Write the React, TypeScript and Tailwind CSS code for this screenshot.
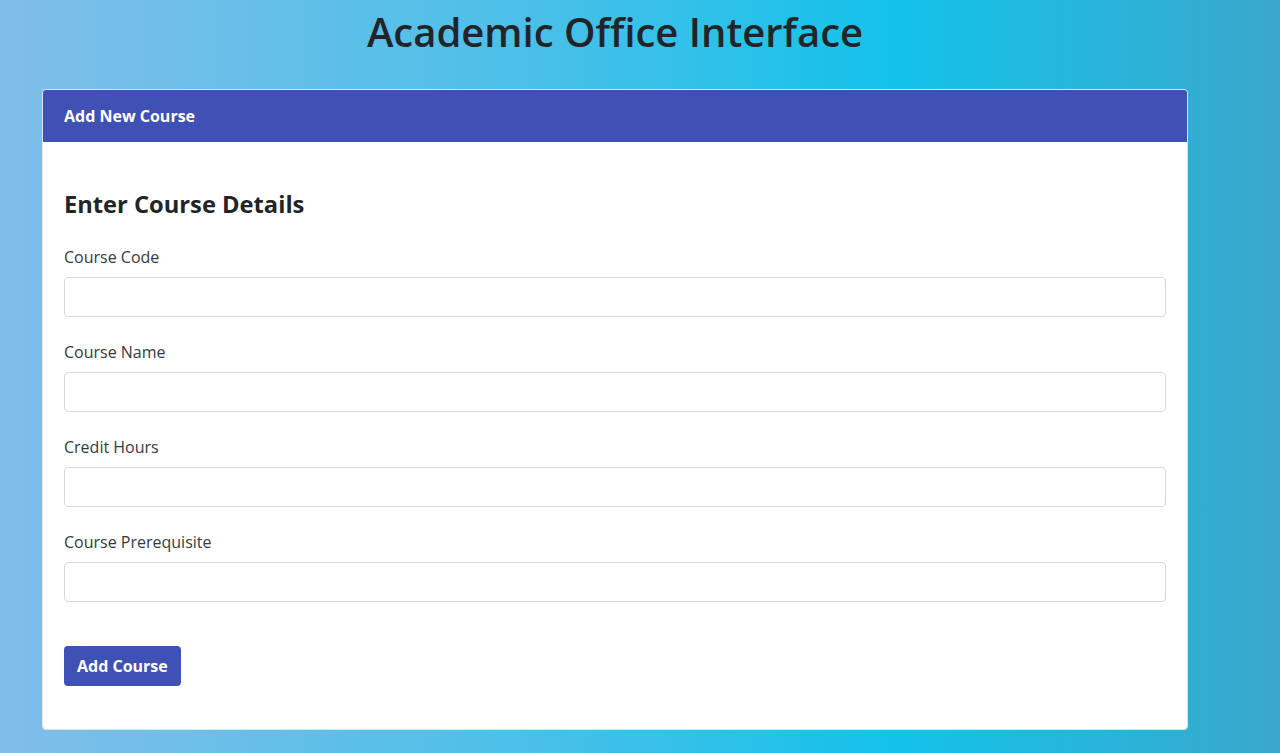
import React from 'react';

const fields = ['Course Code', 'Course Name', 'Credit Hours', 'Course Prerequisite'];

const Field: React.FC<{ label: string }> = ({ label }) => (
    <div className="mb-[23px]">
        <label className="block text-[16px] leading-[24px] text-[#343a40] mb-[8px]">{label}</label>
        <input type="text" className="block w-full h-[40px] rounded-[4px] border border-[#d5d9dd] bg-white px-3 outline-none" />
    </div>
);

const App: React.FC = () => {
    return (
        <div
            className="min-h-[753px] w-full bg-[linear-gradient(to_right,#80bee9_0%,#4cc0e8_40%,#13c2e9_70%,#3ba8cc_100%)] pt-[6px] pb-[24px]"
            style={{ fontFamily: '"Open Sans", "Noto Sans", sans-serif' }}
        >
            <div className="ml-[42px] w-[1146px]">
                <h1 className="text-center text-[40px] leading-[52px] font-semibold text-[#212529] mb-[31px]">
                    Academic Office Interface
                </h1>

                <div className="bg-white rounded-[4px] border border-[#dfe3e7] overflow-hidden">
                    <div className="bg-[#3f51b5] h-[52px] flex items-center px-[21px]">
                        <span className="text-white font-bold text-[16px]">Add New Course</span>
                    </div>
                    <div className="px-[21px] pt-[48px] pb-[43px]">
                        <h2 className="text-[23.7px] leading-[28px] font-bold text-[#212529] mb-[27px]">Enter Course Details</h2>
                        {fields.map((f) => (
                            <Field key={f} label={f} />
                        ))}
                        <button className="mt-[21px] h-[40px] px-[13px] rounded-[4px] bg-[#3f51b5] text-white font-bold text-[16px]">
                            Add Course
                        </button>
                    </div>
                </div>
            </div>
        </div>
    );
};

export default App;
